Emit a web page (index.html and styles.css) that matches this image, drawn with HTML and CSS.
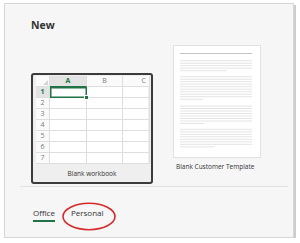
FILE: index.html
```html
<!DOCTYPE html>
<html lang="en">
<head>
<meta charset="utf-8">
<title>New</title>
<link rel="stylesheet" href="styles.css">
</head>
<body>
<div class="frame">
  <h1 class="title">New</h1>
  <div class="cards">
    <div class="workbook">
      <div class="sheet">
        <div class="cell hdr corner"></div>
        <div class="cell hdr col active">A</div>
        <div class="cell hdr col">B</div>
        <div class="cell hdr col c">C</div>

        <div class="cell rowh active">1</div>
        <div class="cell sel"></div>
        <div class="cell"></div>
        <div class="cell"></div>

        <div class="cell rowh">2</div><div class="cell"></div><div class="cell"></div><div class="cell"></div>
        <div class="cell rowh">3</div><div class="cell"></div><div class="cell"></div><div class="cell"></div>
        <div class="cell rowh">4</div><div class="cell"></div><div class="cell"></div><div class="cell"></div>
        <div class="cell rowh">5</div><div class="cell"></div><div class="cell"></div><div class="cell"></div>
        <div class="cell rowh">6</div><div class="cell"></div><div class="cell"></div><div class="cell"></div>
        <div class="cell rowh">7</div><div class="cell"></div><div class="cell"></div><div class="cell"></div>
      </div>
      <div class="wb-caption">Blank workbook</div>
    </div>
    <div class="doc">
      <div class="page">
        <svg width="86" height="111" viewBox="0 0 86 111">
          <path d="M6 7.5h72" stroke="#c4c4c4" stroke-width="1" fill="none"/>
          <path d="M6 14.7h72M6 17.2h72M6 19.7h72M6 22.2h72M6 24.7h47
                   M6 30.7h72M6 33.2h72M6 35.7h72M6 38.2h72M6 40.7h72M6 43.2h72M6 45.7h72M6 48.2h72M6 50.7h72M6 53.2h23
                   M6 60h72M6 62.5h72M6 65h72M6 67.5h72M6 70h72M6 72.5h72M6 75h72M6 77.5h24
                   M6 83.3h72M6 85.8h72M6 88.3h72M6 90.8h72M6 93.3h72M6 95.8h72M6 98.3h72M6 100.8h35"
                stroke="#e4e4e4" stroke-width="1" fill="none"/>
        </svg>
      </div>
      <div class="doc-caption">Blank Customer Template</div>
    </div>
  </div>
  <div class="separator"></div>
  <div class="tabs">
    <span class="tab current">Office</span>
    <span class="tab">Personal</span>
  </div>
  <svg class="circle" width="54" height="29" viewBox="0 0 54 29">
    <ellipse cx="27" cy="14.5" rx="26" ry="13.2" fill="none" stroke="#d42b2b" stroke-width="1.6"/>
  </svg>
</div>
</body>
</html>
```

FILE: styles.css
```css
html, body {
  margin: 0;
  padding: 0;
  background: #ffffff;
}

body {
  font-family: "Open Sans", "Noto Sans", sans-serif;
  color: #333333;
}

.frame {
  position: relative;
  box-sizing: border-box;
  width: 290px;
  height: 235px;
  margin: 3px 0 0 4px;
  padding: 14px 0 0 26px;
  background: #f6f6f6;
  border: 1px solid #d6d6d6;
  box-shadow: 2px 2px 0 #cdcdcd;
}

.title {
  margin: 0;
  font-size: 10.5px;
  line-height: 14px;
  font-weight: 700;
  color: #333333;
}

.cards {
  display: flex;
  align-items: flex-start;
  gap: 20px;
  margin-top: 13px;
}

.workbook {
  box-sizing: border-box;
  width: 122px;
  height: 111px;
  margin-top: 28px;
  padding: 1px 3px 0 3px;
  background: #efefef;
  border: 2px solid #3b3b3b;
  border-radius: 3px;
  display: flex;
  flex-direction: column;
}

.sheet {
  display: grid;
  grid-template-columns: 14px 37px 36px 27px;
  grid-auto-rows: 11px;
  background: #ffffff;
  height: 88px;
}

.cell {
  box-sizing: border-box;
  border-right: 1px solid #dedede;
  border-bottom: 1px solid #dedede;
  font-size: 7px;
  line-height: 10px;
  color: #7a7a7a;
}

.hdr {
  background: #fafafa;
  text-align: center;
}

.hdr.c {
  text-align: right;
  padding-right: 3px;
}

.corner {
  position: relative;
}

.corner::after {
  content: "";
  position: absolute;
  right: 1px;
  bottom: 1px;
  border-left: 5px solid transparent;
  border-bottom: 5px solid #d4d4d4;
}

.col.active {
  background: #e3e3e3;
  color: #217346;
  font-weight: 700;
  border-bottom: 1px solid #217346;
}

.rowh {
  background: #fafafa;
  text-align: center;
}

.rowh.active {
  background: #e3e3e3;
  color: #217346;
  font-weight: 700;
}

.sel {
  position: relative;
  border: 1px solid #217346;
  box-shadow: inset 0 0 0 0.5px #217346;
}

.sel::after {
  content: "";
  position: absolute;
  right: -2.5px;
  bottom: -2.5px;
  width: 3px;
  height: 3px;
  background: #217346;
  border: 0.5px solid #ffffff;
}

.wb-caption {
  flex: 1;
  display: flex;
  align-items: center;
  justify-content: center;
  font-size: 6.5px;
  color: #333333;
}

.doc {
  width: 90px;
  display: flex;
  flex-direction: column;
}

.page {
  box-sizing: border-box;
  width: 88px;
  height: 113px;
  background: #ffffff;
  border: 1px solid #e2e2e2;
}

.page svg {
  display: block;
}

.doc-caption {
  margin-top: 4px;
  padding-left: 3px;
  font-size: 6.5px;
  line-height: 10px;
  color: #333333;
  white-space: nowrap;
}

.separator {
  width: 268px;
  height: 1px;
  margin: 2px 0 0 -11px;
  background: #e2e2e2;
}

.tabs {
  display: flex;
  gap: 16px;
  margin: 20px 0 0 2px;
}

.tab {
  font-size: 8px;
  line-height: 12px;
  color: #333333;
}

.tab.current {
  padding-bottom: 1px;
  border-bottom: 2px solid #217346;
}

.circle {
  position: absolute;
  left: 57px;
  top: 198px;
}
```
